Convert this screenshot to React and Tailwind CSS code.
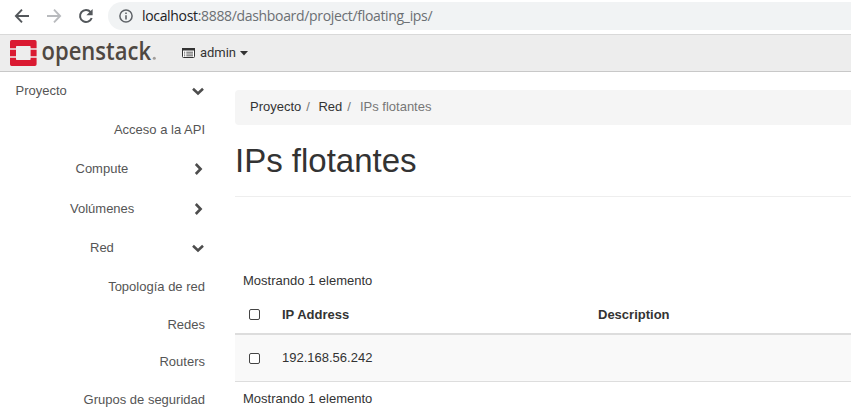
import React from "react";

function Chevron({ down }) {
  return (
    <svg className="block h-[14px] w-[14px]" viewBox="0 0 14 14" fill="none" stroke="#4d4d4d" strokeWidth="2.6">
      <path d={down ? "M2 4.8 7 9.4 12 4.8" : "M4.8 2 9.6 7 4.8 12"} />
    </svg>
  );
}

function NavGroup({ label, down, className }) {
  return (
    <div className={`mr-[-6px] flex shrink-0 items-center justify-between pr-[6px] ${className}`}>
      <span>{label}</span>
      <Chevron down={down} />
    </div>
  );
}

function NavItem({ label, className }) {
  return <div className={`flex shrink-0 items-center justify-end ${className}`}>{label}</div>;
}

function Checkbox() {
  return <span className="block h-[11px] w-[11px] rounded-[2px] border border-[#444] bg-white" />;
}

function AddressBar() {
  return (
    <div className="flex h-[34px] shrink-0 pt-[2px]">
      <svg className="block h-[28px] w-[108px] shrink-0" viewBox="0 2 108 28" fill="none">
        <path d="M29 16H16.5M22 9.7 15.9 16 22 22.3" stroke="#53575b" strokeWidth="1.9" />
        <path d="M47 16H59.5M54 9.7 60.1 16 54 22.3" stroke="#b9bbbe" strokeWidth="1.9" />
        <path d="M90.6 12.1A6 6 0 1 0 91.7 18" stroke="#53575b" strokeWidth="2" />
        <path d="M92.6 9V15.2H86.4Z" fill="#53575b" />
      </svg>
      <div className="flex h-[28px] flex-1 items-center rounded-l-full bg-[#f1f3f4] pl-[11px]">
        <svg className="block h-[14px] w-[14px] shrink-0" viewBox="0 0 14 14" fill="none" stroke="#5f6368">
          <circle cx="7" cy="7" r="6.1" strokeWidth="1.5" />
          <path d="M7 6.2V10.4M7 3.4V5" strokeWidth="1.6" />
        </svg>
        <div className="ml-[9px] whitespace-nowrap font-['Open_Sans',sans-serif] text-[14px] leading-[20px] tracking-[-0.33px] text-[#6b6f73]">
          <span className="text-[#202124]">localhost</span>:8888/dashboard/project/floating_ips/
        </div>
      </div>
    </div>
  );
}

function TopBar() {
  return (
    <header className="flex h-[38px] shrink-0 items-center border-y border-t-[#d9d9d9] border-b-[#c8c8c8] bg-[#ededed]">
      <svg className="block h-[36px] w-[170px] shrink-0 overflow-visible" viewBox="0 35 170 36">
        <g fill="#da1a32">
          <path d="M11.6 40H34.9Q36.6 40 36.6 41.7V48.3H30.6V46.8Q30.6 46.1 29.9 46.1H16.7Q16 46.1 16 46.8V48.3H10V41.7Q10 40 11.6 40Z" />
          <path d="M10 49.7H16V56.3H10ZM30.6 49.7H36.6V56.3H30.6Z" />
          <path d="M10 57.7H16V59.2Q16 59.9 16.7 59.9H29.9Q30.6 59.9 30.6 59.2V57.7H36.6V64.3Q36.6 66 34.9 66H11.6Q10 66 10 64.3Z" />
        </g>
        <text x="41.5" y="60" textLength="109.5" lengthAdjust="spacingAndGlyphs" fontFamily="Open Sans" fontWeight="600" fontSize="25" fill="#4f4842">openstack</text>
        <circle cx="154.3" cy="58.3" r="1.5" fill="#a19d9a" />
      </svg>
      <svg className="ml-[12px] block h-[10px] w-[13px]" viewBox="0 0 13 10">
        <rect x=".5" y=".5" width="12" height="9" rx="1" fill="#fff" stroke="#333" />
        <path d="M0 0H13V2.5H0Z" fill="#333" />
        <path d="M2 4.2H3.2M4.3 4.2H11M2 6H3.2M4.3 6H11M2 7.8H3.2M4.3 7.8H11" stroke="#333" strokeWidth=".8" />
      </svg>
      <span className="ml-[5px] font-['Roboto',sans-serif] text-[13px] tracking-[-0.05px] text-[#333]">admin</span>
      <svg className="ml-[4px] block h-[5px] w-[8px]" viewBox="0 0 8 5"><path d="M0 0H8L4 4.5Z" fill="#333" /></svg>
    </header>
  );
}

export default function App() {
  return (
    <div className="flex h-[411px] w-[851px] flex-col overflow-hidden bg-white font-['Liberation_Sans',Arial,sans-serif] text-[13px] leading-[18px] text-[#333]">
      <AddressBar />
      <TopBar />
      <div className="flex min-h-0 flex-1">
        <nav className="flex w-[235px] shrink-0 flex-col whitespace-nowrap pr-[30px] text-[#555]">
          <NavGroup label="Proyecto" down className="h-[38px] pl-[15.5px]" />
          <NavItem label="Acceso a la API" className="h-[39px]" />
          <NavGroup label="Compute" className="h-[39px] pl-[75.5px]" />
          <NavGroup label="Volúmenes" className="h-[41px] pl-[70px]" />
          <NavGroup label="Red" down className="h-[37px] pl-[90px]" />
          <NavItem label="Topología de red" className="h-[41px]" />
          <NavItem label="Redes" className="h-[35px]" />
          <NavItem label="Routers" className="h-[39px]" />
          <NavItem label="Grupos de seguridad" className="h-[37px]" />
        </nav>
        <main className="flex-1 pt-[18px]">
          <div className="flex h-[35px] items-center rounded-l-[4px] bg-[#f5f5f5] pb-[2px] pl-[15px]">
            <span>Proyecto</span>
            <span className="ml-[5px] text-[#777]">/</span>
            <span className="ml-[8.5px]">Red</span>
            <span className="ml-[5px] text-[#777]">/</span>
            <span className="ml-[9px] text-[#777]">IPs flotantes</span>
          </div>
          <h1 className="flex h-[72px] items-center border-b border-[#eee] text-[33px] leading-[40px]">IPs flotantes</h1>
          <div className="mt-[75px] pl-[8px]">Mostrando 1 elemento</div>
          <div className="mt-[6px] flex h-[39px] items-center border-b-2 border-[#ddd] pl-[14px] font-bold">
            <Checkbox />
            <span className="ml-[22px] w-[316px]">IP Address</span>
            <span>Description</span>
          </div>
          <div className="flex h-[47px] items-center border-b border-[#ddd] bg-[#f9f9f9] pl-[14px]">
            <Checkbox />
            <span className="ml-[22px]">192.168.56.242</span>
          </div>
          <div className="pl-[8px] pt-[8px]">Mostrando 1 elemento</div>
        </main>
      </div>
    </div>
  );
}
